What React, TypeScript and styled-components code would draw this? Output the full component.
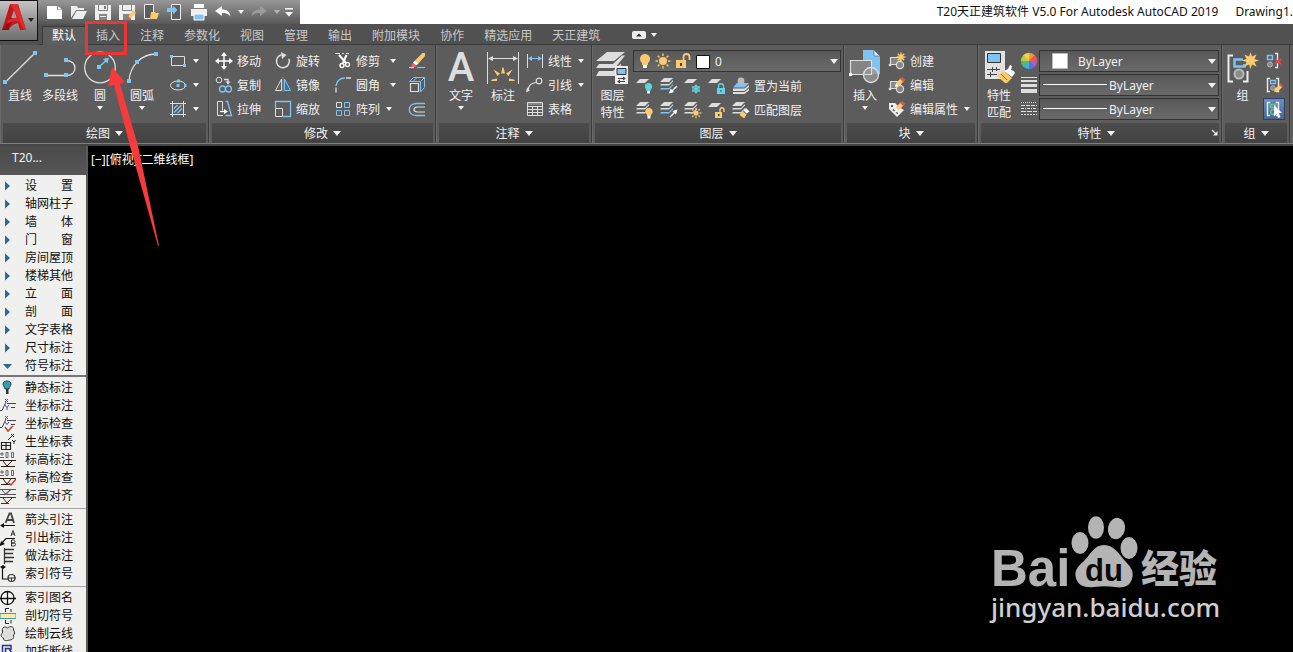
import React from "react";
import styled, { createGlobalStyle, css } from "styled-components";

const W = "#dedede";
const B = "#7dc3f3";
const Y = "#fbc96f";
const T = "#62d3e0";
const R = "#e2574f";

const GlobalStyle = createGlobalStyle`
  * { box-sizing: border-box; }
  body {
    margin: 0;
    background: #000;
    font-family: "Noto Sans", "Noto Sans CJK SC", sans-serif;
    font-size: 12px;
    line-height: 18px;
  }
  button, select {
    font: inherit;
    color: inherit;
    border: 0;
    padding: 0;
    margin: 0;
    background: none;
  }
  svg { display: block; flex: none; }
`;

/* ---------- icons ---------- */

const Dot = ({ x, y }: { x: number; y: number }) => (
  <rect x={x - 2} y={y - 2} width="4" height="4" fill={B} />
);

const Sheet = ({ x, y, fill = W }: { x: number; y: number; fill?: string }) => (
  <path d={`M${x + 4} ${y}h9l-4 4h-9z`} fill={fill} />
);

const Sheets = ({ blue = false }: { blue?: boolean }) => (
  <g>
    <Sheet x={0} y={1} />
    <path d="M1 7h8l4-4v1.5l-4 4H0z" fill={W} />
    <path d="M1 11h8l4-4v1.5l-4 4H0z" fill={blue ? B : W} />
  </g>
);

const Bulb = ({ x, y, fill }: { x: number; y: number; fill: string }) => (
  <g>
    <circle cx={x} cy={y} r="3.6" fill={fill} />
    <path d={`M${x - 2} ${y + 2.5}h4v2h-4z`} fill={fill} />
    <path d={`M${x - 1.5} ${y + 4.5}h3v2.5h-3z`} fill="#fff" />
  </g>
);

const Rays = ({ x, y, r, l }: { x: number; y: number; r: number; l: number }) => (
  <g stroke={Y} strokeWidth="1.4">
    {[0, 45, 90, 135, 180, 225, 270, 315].map((a) => (
      <path key={a} d={`M${x} ${y - r}v${-l}`} transform={`rotate(${a} ${x} ${y})`} />
    ))}
  </g>
);

const BlockShape = () => (
  <g fill="#868686" stroke={W} strokeWidth="1.2">
    <path d="M2.5 5.5h10v7h-10z" />
    <circle cx="12" cy="13" r="3.6" />
    <path d="M.8 11.8h2.4v2.4H.8z" fill={W} stroke="none" />
  </g>
);

const Pencil = ({ tx = 0, ty = 0 }: { tx?: number; ty?: number }) => (
  <g transform={`translate(${tx} ${ty})`}>
    <path d="M0 9l1-4 5-5 3 3-5 5z" fill={Y} />
    <path d="M5 1l2-2 3.2 3L8 4z" fill={R} />
    <path d="M0 9l1-3.5L3.500 8z" fill="#fff" />
  </g>
);

const Brackets = () => (
  <path d="M5 2.500H2.500v13H5M11 2.500h2.500v13H11" fill="none" stroke="#eee" strokeWidth="1.4" />
);

type Drawing = { w: number; h: number; art: React.ReactNode };

const icons: Record<string, Drawing> = {
  line: { w: 36, h: 36, art: <><path d="M3.500 33L33 4" stroke={W} strokeWidth="1.3" /><Dot x={3} y={33} /><Dot x={33} y={4} /></> },
  polyline: { w: 36, h: 36, art: <><path d="M4 26.500H24c12 0 12-15 0-15" fill="none" stroke={W} strokeWidth="1.3" /><Dot x={4} y={26} /><Dot x={24} y={26} /><Dot x={24} y={11} /></> },
  circle: { w: 36, h: 36, art: <><circle cx="18" cy="18.500" r="15.300" fill="none" stroke={W} strokeWidth="1.3" /><Dot x={17} y={18} /><path d="M18 17l7-6" stroke={B} strokeWidth="1.500" /><path d="M27 8.500l-6 1.500 4.500 4.500z" fill={B} /></> },
  arc: { w: 36, h: 36, art: <><path d="M5 32C6 17 17 5 32 5" fill="none" stroke={W} strokeWidth="1.3" /><Dot x={5} y={32} /><Dot x={13} y={13} /><Dot x={32} y={5} /></> },
  rect: { w: 18, h: 18, art: <><path d="M2.500 4.500h13v9h-13z" fill="none" stroke={W} /><path d="M1 3h3v3H1zM14 12h3v3h-3z" fill={B} /></> },
  ellipse: { w: 18, h: 18, art: <><ellipse cx="9" cy="9.500" rx="7.500" ry="4.500" fill="none" stroke={W} /><path d="M7.500 8h3v3h-3zM8 3.500h3v3H8zM15 8h2.500v3H15z" fill={B} /></> },
  hatch: { w: 18, h: 18, art: <><path d="M3.500 1v16M14.500 1v16M1 3.500h16M1 14.500h16" stroke={W} /><path d="M5 8.500l3.500-3.500M5 12.500l7.500-7.500M8.500 13l4.500-4.500" stroke={B} strokeWidth="1.300" /></> },
  move: { w: 18, h: 18, art: <><path d="M9 2v14M2 9h14" stroke="#fff" strokeWidth="1.500" /><path d="M9 0L6 4h6zM9 18l-3-4h6zM0 9l4-3v6zM18 9l-4-3v6z" fill="#fff" /></> },
  copy: { w: 18, h: 18, art: <><circle cx="4" cy="4" r="2.800" fill="none" stroke={W} /><path d="M9 3.500h4v4" fill="none" stroke={W} strokeWidth="1.3" /><path d="M10.500 5.500h5L13 8.500z" fill={W} /><circle cx="7.500" cy="13" r="3" fill="none" stroke={B} strokeWidth="1.300" /><circle cx="13.500" cy="13" r="3" fill="none" stroke={B} strokeWidth="1.300" /></> },
  stretch: { w: 18, h: 18, art: <><path d="M8 15.500H2.500v-14h5v9" fill="none" stroke={W} /><path d="M10.500 1.500h2l4 14h-6" fill="none" stroke={B} strokeWidth="1.300" /><path d="M5 11.500h5" stroke="#fff" strokeWidth="1.300" /><path d="M9 9l4 2.500-4 2.500z" fill="#fff" /></> },
  rotate: { w: 18, h: 18, art: <><path d="M7.500 2.800a6.500 6.500 0 1 0 7.500 4" fill="none" stroke={W} strokeWidth="1.500" /><path d="M7 0l5.500 3L8 7z" fill={W} /></> },
  mirror: { w: 18, h: 18, art: <><path d="M7.500 3v11.500h-6z" fill="none" stroke={W} /><path d="M10.500 3v11.500h6z" fill="#456d8c" stroke={B} /><path d="M9 1v15" stroke="#aaa" strokeWidth=".6" /></> },
  scale: { w: 18, h: 18, art: <><path d="M1.500 8V1.500h15v15H9" fill="none" stroke={B} strokeWidth="1.300" /><path d="M1.500 8.500h7v8h-7z" fill="none" stroke={W} /></> },
  trim: { w: 18, h: 18, art: <><path d="M1 1.500h5M8 1.500h2M12 1.500h3" stroke={W} /><path d="M5 3l7 8M12.500 3L9 11" stroke="#fff" strokeWidth="2" /><circle cx="8" cy="13.500" r="2" fill="none" stroke="#fff" strokeWidth="1.400" /><circle cx="13.500" cy="12.500" r="2" fill="none" stroke="#fff" strokeWidth="1.400" /></> },
  fillet: { w: 18, h: 18, art: <><path d="M2 10C3 4 7 2 11 2" fill="none" stroke={B} strokeWidth="1.400" /><path d="M2 11.500v5M12 2h5" stroke={W} strokeWidth="1.300" /></> },
  array: { w: 18, h: 18, art: <><path d="M2.500 2.500h5v5h-5z" fill="none" stroke={W} /><path d="M10.500 2.500h5v5h-5zM2.500 10.500h5v5h-5zM10.500 10.500h5v5h-5z" fill="none" stroke={B} /></> },
  erase: { w: 18, h: 18, art: <><path d="M7 8.500L14.500 1h2.500v3l-7 8z" fill={Y} /><path d="M5 10.500l3.500 3c-1 2-3 2.500-4.500 1.500-1-1-.5-3 1-4.500z" fill="#f25c6a" /><path d="M5 10.500l2-2 3.200 3.200-2 1.800z" fill="#fff" /><path d="M1 15.500h5" stroke={W} strokeWidth="1.200" /><path d="M9 15.500h8" stroke={B} strokeWidth="1.200" /></> },
  explode: { w: 18, h: 18, art: <><path d="M2.500 7.500h8v8h-8z" fill="none" stroke={W} strokeWidth="1.200" /><path d="M1.500 5.500l4-4h11v10l-4 4.500M12.500 16V5.500h-11M16.500 1.500l-4 4M9 1.500l-4 4" fill="none" stroke={B} /></> },
  offset: { w: 18, h: 18, art: <><path d="M17 3.500H8C-1 4-1 15 8 15.500h9" fill="none" stroke={B} strokeWidth="1.300" /><path d="M17 7H9c-4 .5-4 4.500 0 5h8" fill="none" stroke={W} strokeWidth="1.200" /></> },
  dimension: { w: 36, h: 36, art: <><path d="M2.500 3v32M33.500 3v32M4 9.500h28" stroke={W} /><path d="M3 9.500l5-2.500v5zM33 9.500l-5-2.500v5z" fill={W} /><g fill={Y}><path d="M16 24.500l1.500-6h1l1.500 6zM8.500 20.500l6.500 4-2.500 2.500zM27.500 20.500l-6.500 4 2.500 2.500zM6 32l1-1.500 5-1v2.500zM30 32l-1-1.500-5-1v2.500z" /></g></> },
  linear: { w: 18, h: 18, art: <><path d="M1.500 2v14M16.500 2v14" stroke={W} /><path d="M3 6.500h12" stroke={B} /><path d="M2 6.500l4-2.500v5zM16 6.500l-4-2.500v5z" fill={B} /></> },
  leader: { w: 18, h: 18, art: <><path d="M1.500 15C3 9 5 7 10 6.500" fill="none" stroke={W} strokeWidth="1.200" /><circle cx="13" cy="5" r="2.800" fill="none" stroke={W} strokeWidth="1.200" /><path d="M0 16.500l1-5 3 3z" fill={W} /></> },
  table: { w: 18, h: 18, art: <><path d="M1.500 2.500h15v13h-15zM1.500 6.500h15M1.500 9.500h15M1.500 12.500h15M6.500 6v9M11.500 6v9" fill="none" stroke={W} /><path d="M2 3h14v2H2z" fill="#888" /></> },
  layers: { w: 36, h: 36, art: <><path d="M12 3h18L19 12H1zM4 15h14l9-8.500h3L20 19H1zM4 22h14l8-7.500v2L20 27H1z" fill={W} /><path d="M20 17h13v18H20z" fill="#eee" /><path d="M22 19.500h9v6h-9z" fill={B} stroke="#333" /><path d="M23 29.500h7M23 32.500h7" stroke="#444" /><path d="M28 27.500l3 2-3 2zM25 30.500l-3 2 3 2z" fill="#444" /></> },
  layerOff: { w: 18, h: 18, art: <><Sheet x={0} y={2} /><Bulb x={12.500} y={9.500} fill={T} /></> },
  layerIsolate: { w: 18, h: 18, art: <><Sheets blue /><path d="M17 9l-5 5" stroke="#fff" strokeWidth="1.500" /><path d="M9 16.500l1.500-5 3.500 3.500z" fill="#fff" /></> },
  layerFreeze: { w: 18, h: 18, art: <><Sheet x={0} y={2} /><path d="M12 7.500v9M8 9.700l8 4.600M8 14.300l8-4.600" stroke={T} strokeWidth="1.500" /><circle cx="12" cy="12" r="3.200" fill="none" stroke={T} /></> },
  layerLock: { w: 18, h: 18, art: <><Sheet x={0} y={2} /><path d="M9 11h8v6H9z" fill={T} /><path d="M10.500 11V9c0-3 5-3 5 0v2" fill="none" stroke={T} strokeWidth="1.300" /><path d="M12.500 13h1v2h-1z" fill="#355" /></> },
  setCurrent: { w: 18, h: 18, art: <><path d="M5 6h12l-4.500 4.500H1z" fill={B} /><path d="M1 11.500h11.500L17 8v2l-4.500 4H1zM1 15h11.500L17 11.500v2L12.500 17H1z" fill={W} /><circle cx="9" cy="4" r="3.400" fill="#bbb" /></> },
  layerOn: { w: 18, h: 18, art: <><Sheets /><Bulb x={13} y={10.500} fill={Y} /></> },
  layerUnisolate: { w: 18, h: 18, art: <><Sheets blue /><path d="M10 16l5-5" stroke="#fff" strokeWidth="1.500" /><path d="M17.500 8.500l-1.500 5-3.500-3.500z" fill="#fff" /></> },
  layerThaw: { w: 18, h: 18, art: <><Sheets /><circle cx="12" cy="12" r="2.600" fill={Y} /><Rays x={12} y={12} r={3.500} l={1.800} /></> },
  layerUnlock: { w: 18, h: 18, art: <><Sheet x={0} y={2} /><path d="M7 11h7v6H7z" fill={Y} /><path d="M12 11V9c0-3 4-3 4 0v2" fill="none" stroke={Y} strokeWidth="1.400" /><path d="M10 13h1.500v2H10z" fill="#444" /></> },
  layerMatch: { w: 18, h: 18, art: <><Sheets /><path d="M14 7l3.500 3.500-3 2-3-3z" fill="#fff" /><path d="M10.500 10l4 3.500-2 3.500-1 0-4-3z" fill={Y} /></> },
  insert: { w: 36, h: 36, art: <><path d="M16 1h11l6 6v18H16z" fill={B} /><path d="M27 1l6 6h-6z" fill="#d8effd" stroke="#555" strokeWidth=".6" /><path d="M3.500 11.500h21v14h-21z" fill="#848484" stroke={W} strokeWidth="1.200" /><circle cx="24" cy="26" r="7.500" fill="#999" fillOpacity=".8" stroke={W} strokeWidth="1.300" /><path d="M16 25.500h8.500V19" fill="none" stroke={W} strokeWidth="1.100" /><path d="M2 24h3v3H2z" fill="#fff" /></> },
  createBlock: { w: 18, h: 18, art: <><BlockShape /><circle cx="13" cy="5" r="2.600" fill={Y} /><Rays x={13} y={5} r={2} l={2.500} /></> },
  editBlock: { w: 18, h: 18, art: <><BlockShape /><Pencil tx={7} ty={2} /></> },
  editAttr: { w: 18, h: 18, art: <><path d="M1 3h6l4 4 5 3-7 7-8-8z" fill="#eee" /><path d="M3 5h2v2H3z" fill="#555" /><path d="M5 9.500l1.500 1.500M8 12.500l2 1" stroke="#555" strokeWidth="1.300" /><Pencil tx={7} ty={2} /></> },
  matchProps: { w: 36, h: 36, art: <><path d="M4 2h20v28H4z" fill="#e2e2e2" /><path d="M6.500 4.500h13v9h-13z" fill={B} stroke="#333" /><path d="M6 20.500h13M6 25.500h10M11.500 18v5M9.500 23v5M15.500 18v4" stroke="#444" /><path d="M23 22l4-2 2-4 2 1-1 4 3 1 1 2-3 4z" fill="#fff" /><path d="M23 22l8 7-5 5-2 0-8-7z" fill={Y} /><path d="M20 25l6 6" stroke="#a66b20" /></> },
  colorWheel: { w: 18, h: 18, art: <>{["#f6943b", "#ef5a48", "#b45bc4", "#5a72d8", "#40b2d6", "#58bb63", "#b3cf4a", "#f8d04a"].map((c, i) => <path key={c} d="M9 9V1a8 8 0 0 1 5.700 2.400z" fill={c} stroke={c} strokeWidth=".3" transform={`rotate(${i * 45} 9 9)`} />)}</> },
  lineweight: { w: 18, h: 18, art: <path d="M1 1h16v1H1zM1 4h16v2H1zM1 8h16v3H1zM1 13h16v4H1z" fill={W} /> },
  linetype: { w: 18, h: 18, art: <g stroke={W}><path d="M1 2.500h16" strokeDasharray="1 1" /><path d="M1 5.500h16" strokeDasharray="4 1" /><path d="M1 8.500h16" strokeDasharray="3 1 1 1" /><path d="M1 11.500h16" strokeDasharray="5 1" /><path d="M1 14.500h16" strokeDasharray="2 1" /></g> },
  group: { w: 36, h: 36, art: <><path d="M8 6.500H3.500v26H8M18 32.500h4.500V22" fill="none" stroke="#eee" strokeWidth="2" /><path d="M18 10.500H9.500v7h10V15" fill="none" stroke={B} strokeWidth="2.500" /><circle cx="14" cy="25" r="4.500" fill="#8b8b8b" stroke="#b9b9b9" strokeWidth="2" /><path d="M25.500 3l1.500 4.500 4.500-2-2 4.500 4.500 1.500-4.500 1.500 2 4.500-4.500-2-1.500 4.500-1.500-4.500-4.500 2 2-4.500-4.500-1.500 4.500-1.500-2-4.500 4.500 2z" fill={Y} /></> },
  ungroup: { w: 18, h: 18, art: <><path d="M10 1.500h2.500v14H10" fill="none" stroke="#eee" strokeWidth="1.300" /><path d="M2.500 3.500h5v4h-5z" fill="none" stroke={B} strokeWidth="1.500" /><circle cx="5" cy="12.500" r="2.500" fill="#888" stroke="#bbb" /><path d="M10 7l6 5M16 7l-6 5" stroke="#e8473f" strokeWidth="2" /></> },
  groupEdit: { w: 18, h: 18, art: <><Brackets /><path d="M5.500 4.500h5v3h-5z" fill="none" stroke={B} strokeWidth="1.300" /><circle cx="8" cy="12" r="2.200" fill="#888" stroke="#bbb" /><path d="M9 16l1-3.500 5-4 2.500 2.500-5 4.500z" fill={Y} /><path d="M14 9l1.500-1.500L18 10l-1 1.500z" fill={R} /></> },
  groupSelect: { w: 18, h: 18, art: <><Brackets /><path d="M5.500 4.500h5v3h-5z" fill="none" stroke="#59c98e" strokeWidth="1.500" /><circle cx="8" cy="12" r="2.400" fill="none" stroke="#59c98e" strokeWidth="1.500" /><path d="M9 5l8 8h-3.500l2 4-2 1-2-4L9 16.500z" fill="#fff" /></> },

  newFile: { w: 18, h: 18, art: <path d="M1 3h10v4h5v9H1zM12 3l4 3.500h-4z" fill="#fff" /> },
  open: { w: 18, h: 18, art: <path d="M1 3h6l1 2h6v2H6l-5 8zM6.500 8H17l-4 8H2z" fill="#eee" /> },
  save: { w: 18, h: 18, art: <><path d="M1 2h16v15H1z" fill="#eee" /><path d="M4 2h10v6H4zM5 11h8v6H5z" fill="#858585" /><path d="M5 2h8v5H5z" fill="#eee" /><path d="M10 3h2v3h-2z" fill="#777" /><path d="M6 13h6v1H6z" fill="#eee" /></> },
  saveAs: { w: 18, h: 18, art: <><path d="M1 2h16v15H1z" fill="#eee" /><path d="M4 2h10v6H4zM5 11h8v6H5z" fill="#858585" /><path d="M5 2h8v5H5z" fill="#eee" /><path d="M10 14l5-7 3 3-6 6z" fill={Y} /><path d="M8.500 17.500L10 13l3 3z" fill={R} /></> },
  openMobile: { w: 18, h: 18, art: <><path d="M2.500 1.500h9v14h-9z" fill="#5d5d5d" stroke="#eee" /><path d="M9 9h4l1 1h3l-2 6H8z" fill={Y} /></> },
  saveMobile: { w: 18, h: 18, art: <><path d="M5.500 1.500h9v15h-9z" fill="#5d5d5d" stroke="#eee" /><path d="M1 5h6V2.500L11.500 7 7 11.500V9H1z" fill={B} /></> },
  print: { w: 18, h: 18, art: <><path d="M4 1h10v4H4z" fill="#fff" /><path d="M1 6h16v7H1z" fill="#eee" /><path d="M4 11h10v6H4z" fill={B} stroke="#fff" /></> },
  undo: { w: 18, h: 18, art: <path d="M1 8l7-5v3.500c5 0 8 2 8.500 7C14 10.500 12 10 8 10v3z" fill="#fff" /> },
  redo: { w: 18, h: 18, art: <path d="M17 8l-7-5v3.500c-5 0-8 2-8.500 7C4 10.500 6 10 10 10v3z" fill="#9a9a9a" /> },

  pin: { w: 16, h: 18, art: <><path d="M3 5c0-4 8-4 8 0 0 2-2 3-2 5H5c0-2-2-3-2-5z" fill="#31a0a8" stroke="#1d3b66" /><path d="M6 10h2.500v5H6z" fill="#333" /></> },
  coord: { w: 16, h: 18, art: <><path d="M0 13.500h2L6 5M7 6.500h9M11 10.500h4" stroke="#444" fill="none" /><path d="M5 2l3 3M8 2L5 5M5 8l2 2.500L9 8M7 10v3" stroke="#5a3fb5" fill="none" /></> },
  coordCheck: { w: 16, h: 18, art: <><path d="M0 12.500h2L6 4M7 5.500h9M11 9.500h4" stroke="#444" fill="none" /><path d="M5 1l3 3M8 1L5 4M5 7l2 2.500L9 7" stroke="#5a3fb5" fill="none" /><path d="M5 12l3 4 5-5" stroke="#d63a2b" strokeWidth="1.500" fill="none" /></> },
  coordTable: { w: 16, h: 18, art: <><path d="M1.500 9.500h9v7h-9zM1.500 12.500h9M6 9.500v7" stroke="#222" fill="none" strokeWidth="1.200" /><path d="M8 7l5-5M11 1l3 3M14 1l-3 3M12 7l2 2 1.500-2M14 9v2" stroke="#222" fill="none" /></> },
  level: { w: 16, h: 18, art: <><path d="M0 3h4M2 1v4M0 6.500h4M6 1.500h2v5H6zM11.500 1.500h2v5h-2z" stroke="#555" fill="none" strokeWidth=".9" /><path d="M0 9.500h16M3 10l4 5 5-5M1 15.500h14" stroke="#2c1c10" fill="none" /></> },
  levelCheck: { w: 16, h: 18, art: <><path d="M0 3h4M2 1v4M0 6.500h4M6 1.500h2v5H6zM11.500 1.500h2v5h-2z" stroke="#555" fill="none" strokeWidth=".9" /><path d="M0 9.500h16M3 10l4 5 4-5M1 15.500h9" stroke="#2c1c10" fill="none" /><path d="M9 14l2 2 5-6" stroke="#d63a2b" strokeWidth="1.500" fill="none" /></> },
  levelAlign: { w: 16, h: 18, art: <><path d="M0 2.500h16M0 7.500h16M2 3l4 4.500 5-5M10 3l-6 5" stroke="#555" fill="none" /><path d="M0 10.500h16M3 11l4 5 5-5M1 16.500h8" stroke="#5b2d12" fill="none" /></> },
  arrowNote: { w: 16, h: 18, art: <><path d="M5.500 12L9.500 2.500h1.500L14 12M7 9h6" stroke="#444" strokeWidth="1.800" fill="none" /><path d="M1 14.500h14" stroke="#111" /><path d="M0 14.500l4-2.500v5z" fill="#111" /></> },
  leadNote: { w: 16, h: 18, art: <><path d="M0 16L6 9.500h9" stroke="#111" fill="none" strokeWidth="1.200" /><path d="M0 17l1-5 4 3z" fill="#111" /><path d="M11 7l2-5.500L15 7M11.500 5h3M11.500 11v6h2.500c2 0 2-3 0-3h-2.500 2c2 0 2-3 0-3z" stroke="#333" fill="none" /></> },
  method: { w: 16, h: 18, art: <path d="M4.500 1v16M4 2.500h10M4 6.500h9M4 10.500h10M4 14.500h9" stroke="#333" strokeWidth="1.300" fill="none" /> },
  indexMark: { w: 16, h: 18, art: <><path d="M2.500 2v12H9" stroke="#111" strokeWidth="1.200" fill="none" /><path d="M0 2l3-2 3 2-3 2z" fill="#111" /><circle cx="11.500" cy="13" r="3.500" fill="none" stroke="#333" strokeWidth="1.200" /><path d="M8 13h8M11.500 13v4" stroke="#333" /></> },
  indexName: { w: 16, h: 18, art: <><circle cx="7.500" cy="9" r="6.500" fill="#fff" stroke="#111" strokeWidth="1.300" /><path d="M0 9.500h16M7.500 3v12" stroke="#111" strokeWidth="1.300" /></> },
  section: { w: 16, h: 18, art: <><path d="M0 6.500h16v5H0z" fill="#f4edb0" stroke="#4a9b9b" /><path d="M9 1.500H5.500V5M11 5V2M9 16.500H5.500V13M11 13v3.500" stroke="#222" fill="none" /></> },
  cloud: { w: 16, h: 18, art: <path d="M2.500 6c-1-4 3-5 5-3 2-2 7-2 6 2 1.500 2 1.500 4 0 5 1 4-2 5-4 5-2 1-7 1-6-2-3-1-3-4-1-5z" fill="#ddd" stroke="#333" /> },
  breakLine: { w: 16, h: 18, art: <path d="M2.500 16V2.500H11V7M5.500 16V5.500H9L13 12H9l6 5" stroke="#27338c" strokeWidth="1.500" fill="none" /> },
};

const Icon = ({ name }: { name: string }) => {
  const { w, h, art } = icons[name];
  return (
    <svg width={w} height={h} viewBox={`0 0 ${w} ${h}`} aria-hidden="true">
      {art}
    </svg>
  );
};

const Caret = ({ large = false, color = "#f2f2f2" }: { large?: boolean; color?: string }) =>
  large ? (
    <svg width="8" height="5" viewBox="0 0 8 5" aria-hidden="true"><path d="M0 0h8L4 5z" fill={color} /></svg>
  ) : (
    <svg width="6" height="4" viewBox="0 0 6 4" aria-hidden="true"><path d="M0 0h6L3 4z" fill={color} /></svg>
  );

/* ---------- shell ---------- */

const Shell = styled.div`
  position: relative;
  display: flex;
  flex-direction: column;
  height: 100vh;
  overflow: hidden;
  color: #f0f0f0;
  white-space: nowrap;
`;

const Top = styled.header`
  display: grid;
  grid-template-columns: 38px 1fr;
  background: #515151;
`;

const AppButton = styled.button`
  display: flex;
  align-items: center;
  gap: 1px;
  height: 41px;
  padding: 0 0 2px 1px;
  border: 1px solid #111;
  border-left: 0;
  background: linear-gradient(#c4c4c4, #8e8e8e 60%, #6f6f6f);
`;

const TopRows = styled.div`
  min-width: 0;
`;

const TitleBar = styled.div`
  display: flex;
  align-items: center;
  height: 24px;
  background: #fff;
  overflow: hidden;
`;

const QuickAccess = styled.div`
  display: flex;
  align-items: center;
  height: 24px;
  width: 262px;
  flex: none;
  padding-left: 5px;
  background: linear-gradient(#979797, #585858);
`;

const QuickButton = styled.button<{ $narrow?: boolean }>`
  display: flex;
  justify-content: center;
  align-items: center;
  width: ${(p) => (p.$narrow ? 12 : 24)}px;
  height: 24px;
`;

const Title = styled.div`
  display: flex;
  gap: 17px;
  margin-left: auto;
  color: #111;
`;

const Tabs = styled.nav`
  display: flex;
  align-items: flex-end;
  height: 21px;
  padding-left: 4px;
  border-bottom: 1px solid #3a3a3a;
`;

const Tab = styled.button<{ $active?: boolean }>`
  height: 18px;
  padding: 2px 10px 0;
  color: #c8c8c8;
  line-height: 16px;
  ${(p) =>
    p.$active &&
    css`
      margin-bottom: -1px;
      height: 19px;
      padding: 0 9px;
      color: #fff;
      background: #5e5e5e;
      border: 1px solid #3a3a3a;
      border-bottom: 0;
    `}
`;

const RibbonToggle = styled.button`
  display: flex;
  align-items: center;
  gap: 5px;
  height: 18px;
  margin-left: 22px;
`;

/* ---------- ribbon ---------- */

const Ribbon = styled.div`
  display: flex;
  background: #5c5c5c;
  overflow: hidden;
`;

const PanelBox = styled.section<{ $width: number }>`
  flex: none;
  display: flex;
  flex-direction: column;
  width: ${(p) => p.$width}px;
  border-right: 1px solid #3b3b3b;
  box-shadow: inset 1px 0 #696969;
`;

const PanelBody = styled.div`
  display: flex;
  align-items: flex-start;
  height: 78px;
  padding-top: 4px;
`;

const PanelFooter = styled.div`
  display: flex;
  align-items: center;
  height: 20px;
  margin: 0 2px 0 3px;
  background: linear-gradient(#4c4c4c, #424242);
`;

const Label = styled.span`
  padding-top: 2px;
  line-height: 18px;
`;

const PanelTitle = styled.button`
  display: flex;
  flex: 1;
  justify-content: center;
  align-items: center;
  gap: 5px;
`;

const BigButtonBox = styled.button<{ $width: number }>`
  display: flex;
  flex-direction: column;
  align-items: center;
  width: ${(p) => p.$width}px;
  height: 72px;
`;

const BigLabel = styled.span`
  margin: 2px 0;
  line-height: 17px;
  white-space: pre;
`;

const TextGlyph = styled.span`
  height: 36px;
  color: #dedede;
  font: 500 40px/38px Roboto, sans-serif;
`;

const Column = styled.div<{ $width?: number; $indent?: number }>`
  flex: none;
  width: ${(p) => (p.$width ? `${p.$width}px` : "auto")};
  margin-left: ${(p) => p.$indent ?? 0}px;
`;

const SmallButtonBox = styled.button<{ $on?: boolean; $spread?: boolean }>`
  display: flex;
  align-items: center;
  gap: 4px;
  height: 24px;

  svg + svg,
  span + svg {
    margin-left: ${(p) => (p.$spread ? 6 : 2)}px;
  }

  ${(p) =>
    p.$on &&
    css`
      height: 22px;
      margin: 1px 0;
      padding: 0 2px;
      background: linear-gradient(#6d8fc4, #47638f);
      outline: 1px solid #2c3f66;
      outline-offset: -1px;
    `}
`;

const IconCell = styled.div<{ $inset?: number }>`
  display: flex;
  align-items: center;
  height: 24px;
  padding: 0 ${(p) => p.$inset ?? 0}px;
`;

const ToolRow = styled.div`
  display: flex;
  height: 24px;
  padding-left: 3px;
  gap: 6px;
`;

const SelectBox = styled.div<{ $width: number }>`
  display: grid;
  align-items: center;
  width: ${(p) => p.$width}px;
  height: 22px;
  margin: 1px 0 2px;
  border: 1px solid #333;
  background: linear-gradient(#585858, #6a6a6a);
  > * { grid-area: 1 / 1; }
  > svg {
    justify-self: end;
    margin-right: 2px;
    pointer-events: none;
  }
`;

const Select = styled.select<{ $indent: number }>`
  appearance: none;
  width: 100%;
  height: 20px;
  padding: 2px 0 0 ${(p) => p.$indent}px;
  line-height: 18px;
`;

const Adornment = styled.span<{ $indent: number }>`
  padding-left: ${(p) => p.$indent}px;
  pointer-events: none;
`;

const RibbonEdge = styled.div`
  height: 3px;
  border-top: 1px solid #7e7e7e;
  background: #444;
`;

const BigButton = ({ icon, label, width, caret }: { icon: string; label: string; width: number; caret?: boolean }) => (
  <BigButtonBox $width={width}>
    {icon === "text" ? <TextGlyph>A</TextGlyph> : <Icon name={icon} />}
    <BigLabel>{label}</BigLabel>
    {caret && <Caret />}
  </BigButtonBox>
);

const SmallButton = ({ icon, label, caret, spread, on, name }: { icon: string; label?: string; caret?: boolean; spread?: boolean; on?: boolean; name?: string }) => (
  <SmallButtonBox $on={on} $spread={spread} aria-label={name}>
    <Icon name={icon} />
    {label && <Label>{label}</Label>}
    {caret && <Caret />}
  </SmallButtonBox>
);

const Panel = ({ title, width, launcher, children }: { title: string; width: number; launcher?: boolean; children: React.ReactNode }) => (
  <PanelBox $width={width}>
    <PanelBody>{children}</PanelBody>
    <PanelFooter>
      <PanelTitle>
        <Label>{title}</Label>
        <Caret large />
      </PanelTitle>
      {launcher && (
        <button aria-label="特性选项板">
          <svg width="8" height="8" viewBox="0 0 8 8"><path d="M1 1l4 4" stroke="#eee" strokeWidth="1.300" /><path d="M6.500 2v4.500H2z" fill="#eee" /></svg>
        </button>
      )}
    </PanelFooter>
  </PanelBox>
);

const ValueSelect = ({ label, value, width, indent, adornIndent, children }: { label: string; value: string; width: number; indent: number; adornIndent: number; children: React.ReactNode }) => (
  <SelectBox $width={width}>
    <Select aria-label={label} $indent={indent} defaultValue={value}>
      <option>{value}</option>
    </Select>
    <Adornment $indent={adornIndent}>{children}</Adornment>
    <Caret large />
  </SelectBox>
);

const LineSample = () => (
  <svg width="64" height="2" viewBox="0 0 64 2" aria-hidden="true"><path d="M0 .5h64" stroke="#fff" /></svg>
);

/* ---------- workspace ---------- */

const Workspace = styled.main`
  display: flex;
  flex: 1;
  min-height: 0;
`;

const Sidebar = styled.aside`
  flex: none;
  width: 88px;
  overflow: hidden;
  border-right: 2px solid #5a5a5a;
  background: #f0f0ee;
  color: #111;
`;

const SidebarHeader = styled.div`
  height: 29px;
  margin-bottom: 2px;
  padding: 3px 12px;
  background: linear-gradient(#4a4a4a, #565656);
  color: #f0f0f0;
`;

const MenuItem = styled.button`
  display: flex;
  align-items: center;
  width: 100%;
  height: 18px;
  white-space: pre;
`;

const MenuIcon = styled.span`
  width: 25px;
`;

const Divider = styled.hr<{ $dark?: boolean }>`
  height: ${(p) => (p.$dark ? 2 : 1)}px;
  margin: ${(p) => (p.$dark ? "0 0 2px" : "3px 0 2px")};
  border: 0;
  background: ${(p) => (p.$dark ? "#777" : "#a5a5a5")};
`;

const Canvas = styled.section`
  display: flex;
  flex: 1;
  flex-direction: column;
  justify-content: space-between;
  align-items: flex-start;
  min-width: 0;
  padding: 5px 71px 30px 3px;
  background: #000;
  color: #fff;
`;

const Watermark = styled.div`
  align-self: flex-end;
  width: 231px;
  color: #cfcfcf;

  svg { overflow: visible; }
`;

const SiteName = styled.div`
  font: 500 26px/30px "Noto Sans", sans-serif;
`;

const FocusFrame = styled.div`
  position: absolute;
  left: 85px;
  top: 21px;
  width: 42px;
  height: 34px;
  border: 3px solid #f03434;
  pointer-events: none;
`;

const Pointer = styled.svg`
  position: absolute;
  left: 104px;
  top: 66px;
  pointer-events: none;
`;

const tabs = ["默认", "插入", "注释", "参数化", "视图", "管理", "输出", "附加模块", "协作", "精选应用", "天正建筑"];

const quickTools = [
  ["newFile", "新建"],
  ["open", "打开"],
  ["save", "保存"],
  ["saveAs", "另存为"],
  ["openMobile", "从移动设备打开"],
  ["saveMobile", "保存到移动设备"],
  ["print", "打印"],
  ["undo", "放弃"],
];

const categories = ["设　　置", "轴网柱子", "墙　　体", "门　　窗", "房间屋顶", "楼梯其他", "立　　面", "剖　　面", "文字表格", "尺寸标注", "符号标注"];

const commandGroups = [
  [["pin", "静态标注"], ["coord", "坐标标注"], ["coordCheck", "坐标检查"], ["coordTable", "生坐标表"], ["level", "标高标注"], ["levelCheck", "标高检查"], ["levelAlign", "标高对齐"]],
  [["arrowNote", "箭头引注"], ["leadNote", "引出标注"], ["method", "做法标注"], ["indexMark", "索引符号"]],
  [["indexName", "索引图名"], ["section", "剖切符号"], ["cloud", "绘制云线"], ["breakLine", "加折断线"]],
];

export default function App() {
  return (
    <Shell>
      <GlobalStyle />
      <Top>
        <AppButton aria-label="应用程序菜单">
          <svg width="26" height="34" viewBox="0 0 26 34">
            <path d="M1 27L9 1h8l8 26h-6l-2-7c-4 1-8 3-9 7z" fill="#c4161c" />
            <path d="M13 7L9.500 17c2-1 4-1.500 6.500-1.500z" fill="#9d9d9d" />
            <path d="M1 27l8-12 8 1c-5 1-9 5-9 11z" fill="#8f0f14" />
            <path d="M9 1h8l8 26h-2L13 7z" fill="#de2f30" />
            <path d="M7 17c4-2 8-2 12-1l1 4c-5-2-9-2-14 1z" fill="#d8282b" />
          </svg>
          <Caret color="#222" />
        </AppButton>
        <TopRows>
          <TitleBar>
            <QuickAccess>
              {quickTools.map(([icon, name]) => (
                <QuickButton key={icon} aria-label={name}><Icon name={icon} /></QuickButton>
              ))}
              <QuickButton $narrow aria-label="放弃列表"><Caret /></QuickButton>
              <QuickButton aria-label="重做"><Icon name="redo" /></QuickButton>
              <QuickButton $narrow aria-label="重做列表"><Caret color="#b5b5b5" /></QuickButton>
              <QuickButton $narrow aria-label="自定义快速访问工具栏">
                <svg width="10" height="9" viewBox="0 0 10 9"><path d="M1 0h8v1.500H1zM1 4h8L5 8.500z" fill="#fff" /></svg>
              </QuickButton>
            </QuickAccess>
            <Title>
              <span>T20天正建筑软件 V5.0 For Autodesk AutoCAD 2019</span>
              <span>Drawing1.</span>
            </Title>
          </TitleBar>
          <Tabs>
            {tabs.map((t, i) => (
              <Tab key={t} $active={i === 0}>{t}</Tab>
            ))}
            <RibbonToggle aria-label="最小化功能区">
              <svg width="14" height="8" viewBox="0 0 14 8"><rect width="14" height="8" rx="2" fill="#eee" /><path d="M4 5.500h6L7 2.500z" fill="#333" /></svg>
              <Caret />
            </RibbonToggle>
          </Tabs>
        </TopRows>
      </Top>

      <Ribbon>
        <Panel title="绘图" width={209}>
          <BigButton icon="line" label="直线" width={40} />
          <BigButton icon="polyline" label="多段线" width={40} />
          <BigButton icon="circle" label="圆" width={40} caret />
          <BigButton icon="arc" label="圆弧" width={44} caret />
          <Column $indent={5}>
            <SmallButton icon="rect" name="矩形" caret />
            <SmallButton icon="ellipse" name="椭圆" caret />
            <SmallButton icon="hatch" name="图案填充" caret />
          </Column>
        </Panel>

        <Panel title="修改" width={227}>
          <Column $indent={6} $width={59}>
            <SmallButton icon="move" label="移动" />
            <SmallButton icon="copy" label="复制" />
            <SmallButton icon="stretch" label="拉伸" />
          </Column>
          <Column $width={60}>
            <SmallButton icon="rotate" label="旋转" />
            <SmallButton icon="mirror" label="镜像" />
            <SmallButton icon="scale" label="缩放" />
          </Column>
          <Column $width={74}>
            <SmallButton icon="trim" label="修剪" caret spread />
            <SmallButton icon="fillet" label="圆角" caret spread />
            <SmallButton icon="array" label="阵列" caret />
          </Column>
          <Column>
            <SmallButton icon="erase" name="删除" />
            <SmallButton icon="explode" name="分解" />
            <SmallButton icon="offset" name="偏移" />
          </Column>
        </Panel>

        <Panel title="注释" width={156}>
          <Column $indent={4}><BigButton icon="text" label="文字" width={42} caret /></Column>
          <BigButton icon="dimension" label="标注" width={42} />
          <Column $indent={2}>
            <SmallButton icon="linear" label="线性" caret />
            <SmallButton icon="leader" label="引线" caret />
            <SmallButton icon="table" label="表格" />
          </Column>
        </Panel>

        <Panel title="图层" width={252}>
          <BigButton icon="layers" label={"图层\n特性"} width={41} />
          <Column>
            <ValueSelect label="图层" value="0" width={208} indent={81} adornIndent={4}>
              <svg width="74" height="20" viewBox="0 0 74 20">
                <circle cx="7" cy="8" r="5" fill={Y} />
                <path d="M4 11h6v3H4z" fill={Y} />
                <path d="M5 14h4v3H5z" fill="#fff" />
                <circle cx="25" cy="10" r="4" fill={Y} />
                <Rays x={25} y={10} r={5} l={2.500} />
                <path d="M38 9h10v8H38z" fill={Y} />
                <path d="M45.500 9V6c0-4 6-4 6 0v3" fill="none" stroke={Y} strokeWidth="1.800" />
                <path d="M42 12h2v3h-2z" fill="#444" />
                <path d="M58.500 4.500h13v13h-13z" fill="#fff" stroke="#111" />
              </svg>
            </ValueSelect>
            <ToolRow>
              <SmallButton icon="layerOff" name="关" />
              <SmallButton icon="layerIsolate" name="隔离" />
              <SmallButton icon="layerFreeze" name="冻结" />
              <SmallButton icon="layerLock" name="锁定" />
              <SmallButton icon="setCurrent" label="置为当前" />
            </ToolRow>
            <ToolRow>
              <SmallButton icon="layerOn" name="打开所有图层" />
              <SmallButton icon="layerUnisolate" name="取消隔离" />
              <SmallButton icon="layerThaw" name="解冻所有图层" />
              <SmallButton icon="layerUnlock" name="解锁" />
              <SmallButton icon="layerMatch" label="匹配图层" />
            </ToolRow>
          </Column>
        </Panel>

        <Panel title="块" width={134}>
          <BigButton icon="insert" label="插入" width={42} caret />
          <Column $indent={2}>
            <SmallButton icon="createBlock" label="创建" />
            <SmallButton icon="editBlock" label="编辑" />
            <SmallButton icon="editAttr" label="编辑属性" caret />
          </Column>
        </Panel>

        <Panel title="特性" width={244} launcher>
          <BigButton icon="matchProps" label={"特性\n匹配"} width={42} />
          <Column $width={19}>
            <IconCell><Icon name="colorWheel" /></IconCell>
            <IconCell><Icon name="lineweight" /></IconCell>
            <IconCell><Icon name="linetype" /></IconCell>
          </Column>
          <Column>
            <ValueSelect label="对象颜色" value="ByLayer" width={180} indent={38} adornIndent={12}>
              <svg width="16" height="16" viewBox="0 0 16 16"><path d="M.5.5h15v15H.5z" fill="#fff" stroke="#bbb" /></svg>
            </ValueSelect>
            <ValueSelect label="线宽" value="ByLayer" width={180} indent={69} adornIndent={3}><LineSample /></ValueSelect>
            <ValueSelect label="线型" value="ByLayer" width={180} indent={69} adornIndent={3}><LineSample /></ValueSelect>
          </Column>
        </Panel>

        <Panel title="组" width={68}>
          <BigButton icon="group" label="组" width={41} />
          <Column $width={22}>
            <IconCell $inset={2}><SmallButton icon="ungroup" name="解除编组" /></IconCell>
            <IconCell $inset={2}><SmallButton icon="groupEdit" name="组编辑" /></IconCell>
            <SmallButton icon="groupSelect" name="启用组选择" on />
          </Column>
        </Panel>
      </Ribbon>
      <RibbonEdge />

      <Workspace>
        <Sidebar>
          <SidebarHeader>T20...</SidebarHeader>
          {categories.map((c, i) => (
            <MenuItem key={c}>
              <MenuIcon>
                <svg width="14" height="12" viewBox="0 0 14 12" aria-hidden="true">
                  <path d={i === categories.length - 1 ? "M3 4h9l-4.500 5z" : "M5 1.500l5 4.500-5 4.500z"} fill="#2f6796" />
                </svg>
              </MenuIcon>
              {c}
            </MenuItem>
          ))}
          <Divider $dark />
          {commandGroups.map((group, g) => (
            <React.Fragment key={g}>
              {g > 0 && <Divider />}
              {group.map(([icon, label]) => (
                <MenuItem key={icon}>
                  <MenuIcon><Icon name={icon} /></MenuIcon>
                  {label}
                </MenuItem>
              ))}
            </React.Fragment>
          ))}
        </Sidebar>
        <Canvas>
          <div>[−][俯视][二维线框]</div>
          <Watermark>
            <svg width="231" height="76" viewBox="0 0 231 76" role="img" aria-label="Baidu 经验">
              <g fill="#b4b4b4">
                <ellipse cx="89" cy="27" rx="8.500" ry="11" />
                <ellipse cx="105" cy="11.500" rx="8" ry="11.300" />
                <ellipse cx="125.500" cy="12.500" rx="8.500" ry="10.800" transform="rotate(12 125.500 12.500)" />
                <ellipse cx="138" cy="32" rx="8.500" ry="11" />
                <path d="M113 29c10 0 15 9 21 16 7 7 9 11 7 18-3 9-11 9-17 8-7-1-14-1-21 0-8 1-16-1-18-9-2-7 1-11 8-17 7-7 10-16 20-16z" />
                <text x="0" y="70" fontFamily="Liberation Sans, sans-serif" fontSize="51" fontWeight="700">Bai</text>
                <text x="150" y="66" fontFamily="Noto Sans CJK SC, sans-serif" fontSize="38" fontWeight="900">经验</text>
              </g>
              <text x="94" y="65" fill="#0a0a0a" fontFamily="Liberation Sans, sans-serif" fontSize="31" fontWeight="700">du</text>
            </svg>
            <SiteName>jingyan.baidu.com</SiteName>
          </Watermark>
        </Canvas>
      </Workspace>

      <FocusFrame />
      <Pointer width="58" height="182" viewBox="0 0 58 182" aria-hidden="true">
        <path d="M8 1L21 16l-5 2L34 80 55 180h-1L26 80 10 19l-6 1z" fill="#f53b3b" />
      </Pointer>
    </Shell>
  );
}
